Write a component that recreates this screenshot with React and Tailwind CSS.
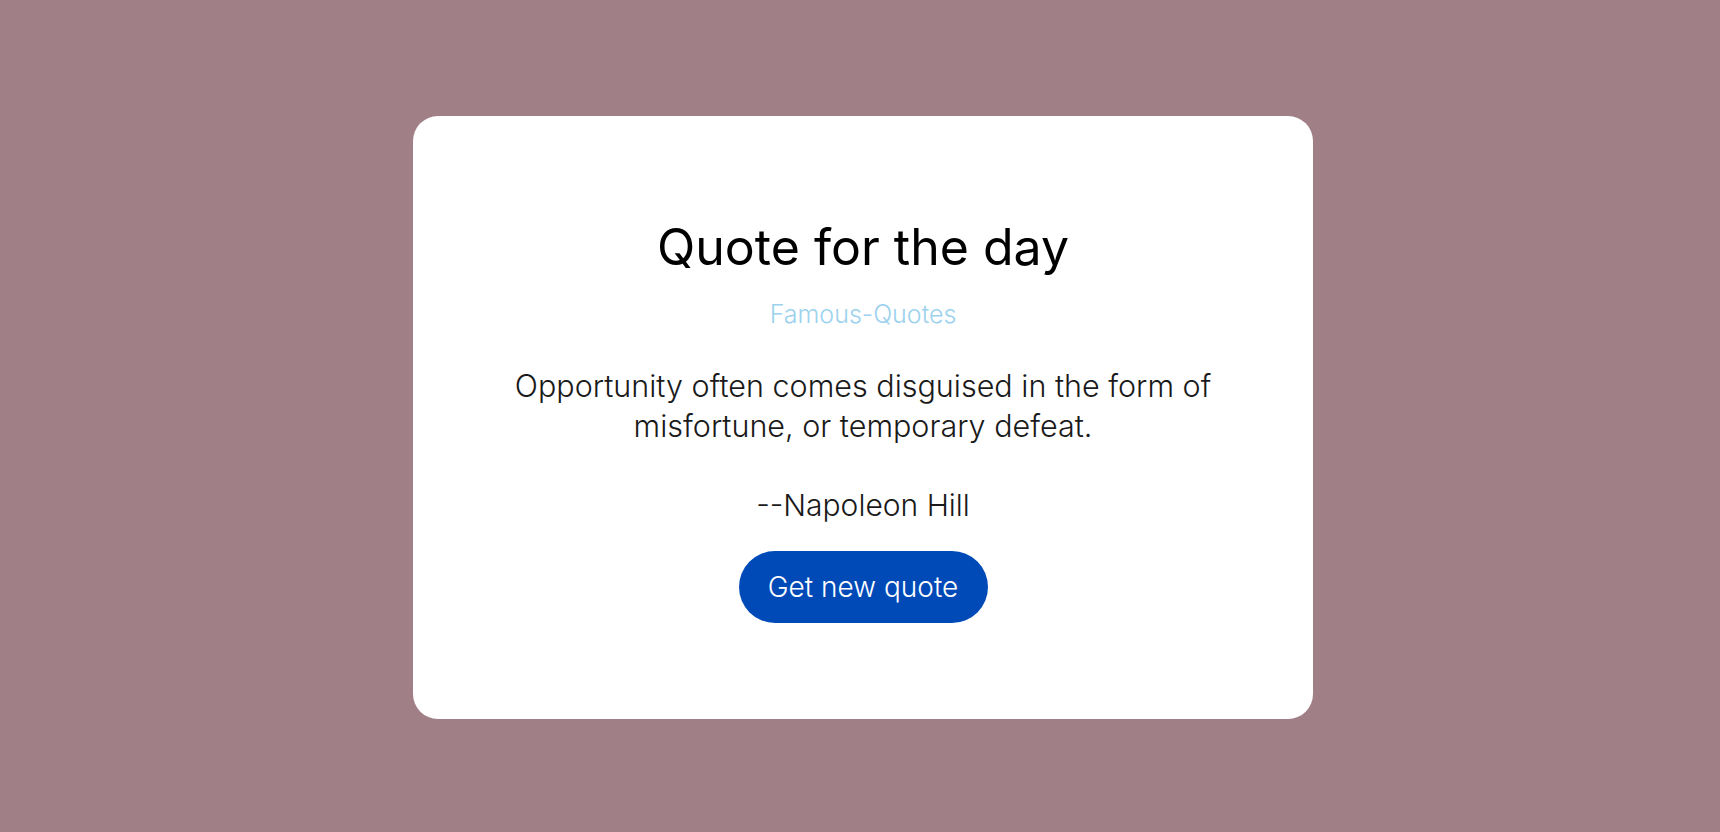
export default function App() {
  return (
    <div className="min-h-screen bg-[#a17f87] flex items-center justify-center font-['Inter','Liberation_Sans',sans-serif]">
      <div className="ml-[6px] mt-[3px] w-[900px] h-[603px] bg-white rounded-[25px] flex flex-col items-center pt-[102px] text-center">
        <h1 className="text-[50px] leading-[58px] font-normal text-black">Quote for the day</h1>
        <p className="mt-[23px] text-[25px] leading-[30px] font-light text-[#9dd2ee]">Famous-Quotes</p>
        <p className="mt-[37px] w-[760px] text-[30.5px] leading-[40px] font-light text-[#1a1a1a]">
          Opportunity often comes disguised in the form of misfortune, or temporary defeat.
        </p>
        <p className="mt-[39px] text-[30px] leading-[40px] font-light text-[#1a1a1a]">--Napoleon Hill</p>
        <button className="mt-[26px] w-[249px] h-[72px] rounded-full bg-[#004ab8] text-white text-[28px] font-light">
          Get new quote
        </button>
      </div>
    </div>
  );
}
